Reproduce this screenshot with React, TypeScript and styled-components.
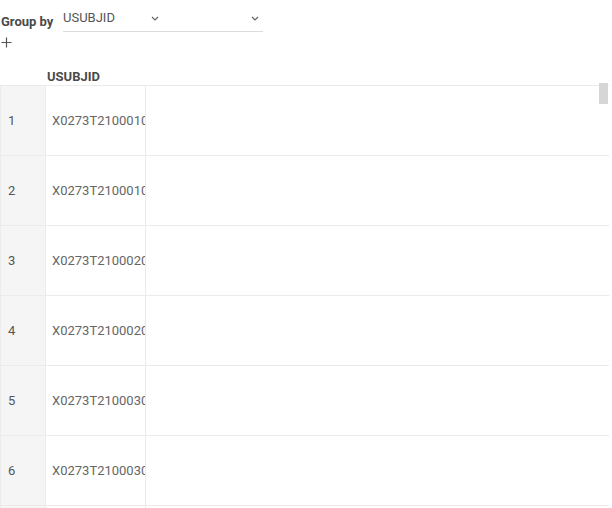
import React from "react";
import styled, { createGlobalStyle } from "styled-components";

const GlobalStyle = createGlobalStyle`
  html, body {
    margin: 0;
    padding: 0;
    background: #ffffff;
    font-family: Roboto, "Liberation Sans", sans-serif;
    overflow: hidden;
  }
`;

const Page = styled.div`
  width: 612px;
  height: 508px;
  overflow: hidden;
  display: flex;
  flex-direction: column;
`;

const Toolbar = styled.div`
  display: flex;
  align-items: flex-start;
  padding-left: 1px;
  height: 33px;
`;

const GroupLabel = styled.span`
  font-size: 13px;
  font-weight: 700;
  color: #4a4a4a;
  margin-top: 14px;
  width: 62px;
`;

const Select = styled.div`
  width: 200px;
  height: 32px;
  box-sizing: border-box;
  border-bottom: 1px solid #dcdcdc;
  display: flex;
  align-items: flex-start;
  padding-top: 10px;
  font-size: 13px;
  color: #555;
`;

const SelectValue = styled.span`
  width: 88px;
`;

const Chevron = styled.svg`
  margin-top: 6px;
`;

const Spacer = styled.div`
  flex: 1;
`;

const AddButton = styled.div`
  height: 27px;
  padding-left: 1px;
  padding-top: 4px;
  box-sizing: border-box;
  display: flex;
  align-items: flex-start;
`;

const Grid = styled.div`
  position: relative;
  width: 609px;
  flex: 1;
  overflow: hidden;
`;

const Row = styled.div<{ $height: number }>`
  display: grid;
  grid-template-columns: 46px 100px 1fr;
  height: ${(p) => p.$height}px;
  box-sizing: border-box;
  border-bottom: 1px solid #ebebeb;
`;

const HeaderCell = styled.div`
  display: flex;
  align-items: center;
  font-size: 13px;
  font-weight: 700;
  color: #4a4a4a;
  padding-left: 1px;
  padding-top: 8px;
`;

const IndexCell = styled.div`
  background: #f5f5f5;
  border-right: 1px solid #ebebeb;
  box-shadow: inset 1px 0 0 #ececec;
  display: flex;
  align-items: center;
  padding-left: 8px;
  font-size: 13px;
  color: #555;
`;

const DataCell = styled.div`
  border-right: 1px solid #ebebeb;
  display: flex;
  align-items: center;
  padding-left: 6px;
  font-size: 13px;
  color: #666;
  overflow: hidden;
  white-space: nowrap;
`;

const EmptyCell = styled.div``;

const ScrollThumb = styled.div`
  position: absolute;
  top: 23px;
  right: 1px;
  width: 9px;
  height: 21px;
  background: #d6d6d6;
`;

const ids = [
  "X0273T21000101",
  "X0273T21000102",
  "X0273T21000201",
  "X0273T21000202",
  "X0273T21000301",
  "X0273T21000302",
  "X0273T21000401",
];

const ChevronIcon = () => (
  <Chevron width="8" height="5" viewBox="0 0 8 5">
    <path d="M1 1 L4 4 L7 1" fill="none" stroke="#666" strokeWidth="1.2" />
  </Chevron>
);

export default function App() {
  return (
    <Page>
      <GlobalStyle />
      <Toolbar>
        <GroupLabel>Group by</GroupLabel>
        <Select>
          <SelectValue>USUBJID</SelectValue>
          <ChevronIcon />
          <Spacer />
          <ChevronIcon />
          <span style={{ width: 4 }} />
        </Select>
      </Toolbar>
      <AddButton>
        <svg width="11" height="11" viewBox="0 0 11 11">
          <path d="M5.5 0.5 V10.5 M0.5 5.5 H10.5" stroke="#555" strokeWidth="1.2" />
        </svg>
      </AddButton>
      <Grid>
        <Row $height={26}>
          <HeaderCell />
          <HeaderCell>USUBJID</HeaderCell>
          <HeaderCell />
        </Row>
        {ids.map((id, i) => (
          <Row key={id} $height={70}>
            <IndexCell>{i + 1}</IndexCell>
            <DataCell>{id}</DataCell>
            <EmptyCell />
          </Row>
        ))}
        <ScrollThumb />
      </Grid>
    </Page>
  );
}
